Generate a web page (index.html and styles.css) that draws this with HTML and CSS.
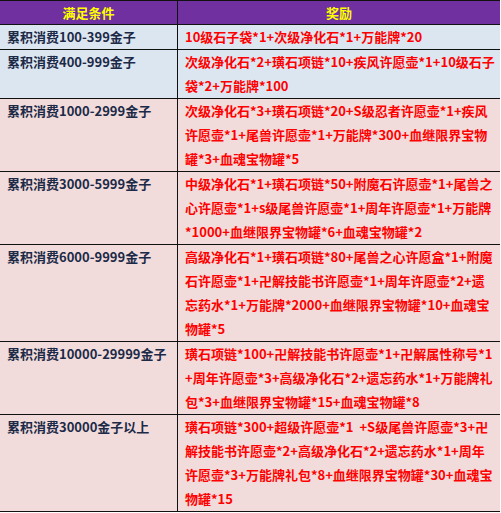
FILE: index.html
```
<!DOCTYPE html>
<html>
<head>
<meta charset="utf-8">
<link rel="stylesheet" href="styles.css">
</head>
<body>
<table class="rewards">
  <thead>
    <tr class="head">
      <th class="cond">满足条件</th>
      <th class="prize">奖励</th>
    </tr>
  </thead>
  <tbody>
    <tr class="blue">
      <td class="cond">累积消费100-399金子</td>
      <td class="prize">10级石子袋*1+次级净化石*1+万能牌*20</td>
    </tr>
    <tr class="blue">
      <td class="cond">累积消费400-999金子</td>
      <td class="prize">次级净化石*2+璜石项链*10+疾风许愿壶*1+10级石子<br>袋*2+万能牌*100</td>
    </tr>
    <tr class="pink">
      <td class="cond">累积消费1000-2999金子</td>
      <td class="prize">次级净化石*3+璜石项链*20+S级忍者许愿壶*1+疾风<br>许愿壶*1+尾兽许愿壶*1+万能牌*300+血继限界宝物<br>罐*3+血魂宝物罐*5</td>
    </tr>
    <tr class="pink">
      <td class="cond">累积消费3000-5999金子</td>
      <td class="prize">中级净化石*1+璜石项链*50+附魔石许愿壶*1+尾兽之<br>心许愿壶*1+s级尾兽许愿壶*1+周年许愿壶*1+万能牌<br>*1000+血继限界宝物罐*6+血魂宝物罐*2</td>
    </tr>
    <tr class="pink">
      <td class="cond">累积消费6000-9999金子</td>
      <td class="prize">高级净化石*1+璜石项链*80+尾兽之心许愿盒*1+附魔<br>石许愿壶*1+卍解技能书许愿壶*1+周年许愿壶*2+遗<br>忘药水*1+万能牌*2000+血继限界宝物罐*10+血魂宝<br>物罐*5</td>
    </tr>
    <tr class="pink">
      <td class="cond">累积消费10000-29999金子</td>
      <td class="prize">璜石项链*100+卍解技能书许愿壶*1+卍解属性称号*1<br>+周年许愿壶*3+高级净化石*2+遗忘药水*1+万能牌礼<br>包*3+血继限界宝物罐*15+血魂宝物罐*8</td>
    </tr>
    <tr class="pink">
      <td class="cond">累积消费30000金子以上</td>
      <td class="prize">璜石项链*300+超级许愿壶*1&nbsp; +S级尾兽许愿壶*3+卍<br>解技能书许愿壶*2+高级净化石*2+遗忘药水*1+周年<br>许愿壶*3+万能牌礼包*8+血继限界宝物罐*30+血魂宝<br>物罐*15</td>
    </tr>
  </tbody>
</table>
</body>
</html>
```
FILE: styles.css
```
html, body {
  margin: 0;
  padding: 0;
  background: #ffffff;
}

.rewards {
  border-collapse: collapse;
  width: 500px;
  table-layout: fixed;
  font-family: "Noto Sans CJK SC", "Noto Sans", sans-serif;
  font-size: 13px;
  font-weight: bold;
  border-top: 1px solid #111;
  border-bottom: 1px solid #111;
}

.rewards th,
.rewards td {
  padding: 0;
  line-height: 24px;
  vertical-align: top;
  white-space: nowrap;
  border-top: 1px solid #111;
  border-bottom: 1px solid #111;
}

.rewards .cond {
  width: 177px;
  border-right: 1px solid #111;
}

.head th {
  background: #7030a0;
  color: #ffff00;
  text-align: center;
  line-height: 23px;
  font-size: 13px;
}

.rewards td.cond {
  color: #1c2a48;
  padding-left: 7px;
  width: 170px;
}

.rewards td.prize {
  color: #ff0000;
  padding-left: 7px;
  letter-spacing: 0;
}

.blue td {
  background: #dce6f1;
}

.pink td {
  background: #f2dcdb;
}
```
